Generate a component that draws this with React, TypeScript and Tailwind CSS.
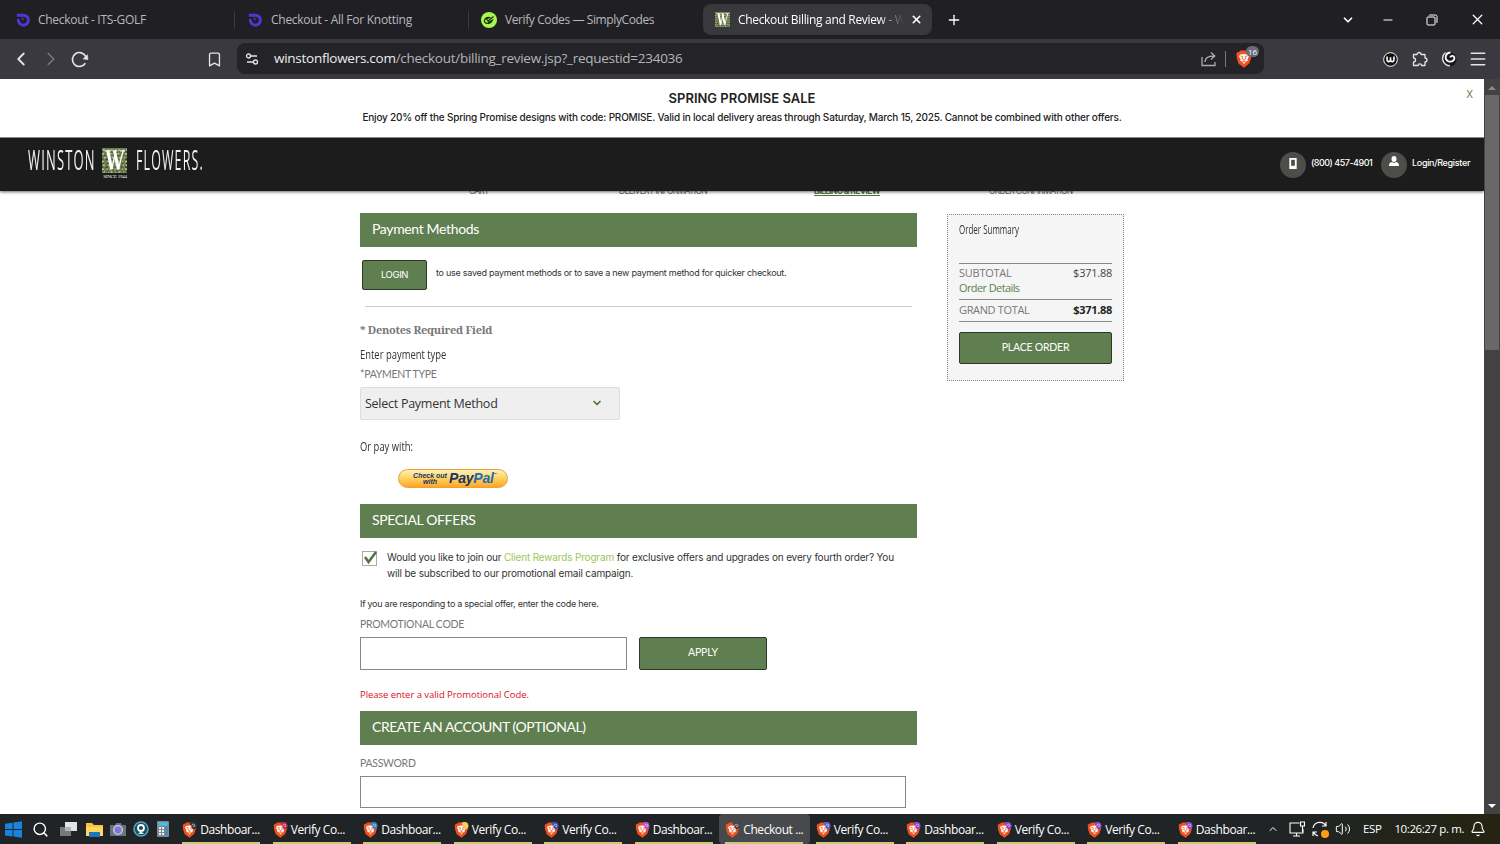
import type { ReactNode } from 'react';
import { Bookmark, ChevronDown, ChevronLeft, ChevronRight, ChevronUp, Menu, Minus, Plus, Search, X, Bell, Volume2 } from 'lucide-react';

const taskItems = [
  { label: 'Dashboar...', badge: '#333333' },
  { label: 'Verify Co...', badge: '#b8284f' },
  { label: 'Dashboar...', badge: '#2c7fc4' },
  { label: 'Verify Co...', badge: '#f2c94c' },
  { label: 'Verify Co...', badge: '#3d4fb8' },
  { label: 'Dashboar...', badge: '#b44fc4' },
  { label: 'Checkout ...', badge: '#444444', active: true },
  { label: 'Verify Co...', badge: '#5a5fd0' },
  { label: 'Dashboar...', badge: '#8a45c8' },
  { label: 'Verify Co...', badge: '#8a45c8' },
  { label: 'Verify Co...', badge: '#8a45c8' },
  { label: 'Dashboar...', badge: '#8a45c8' },
];

function BraveIcon({ badge, className }: { badge?: string; className: string }) {
  return (
    <svg viewBox="0 0 16 18" className={className}>
      <path d="M4.500 .5h7l1.500 1.600 1.500-.2 1.300 2.400-.6 1.500.3 1-2.100 6.500L8 17.800l-5.400-4.100L.5 7.300l.3-1L.2 4.300l1.300-2.400 1.500.2z" fill="#f2501e" />
      <path d="M4 4.500 8 4l4 .5 1 2-1.500 2.500.4 1.500L9.500 12 8 14l-1.500-2-2.400-1.500.4-1.500L3 6.500z" fill="#fff" />
      <path d="m4.500 6 2.300.5L6 8.500l2 1 2-1-.8-2 2.300-.5M8 10v2M6.200 11 8 12l1.800-1" stroke="#f2501e" strokeWidth=".8" fill="none" />
      {badge && <path d="M8 1.500A4.300 4.300 0 0 1 15.800 4a4.300 4.300 0 0 1-4 4.500z" fill={badge} />}
      {badge && <path d="M10.500 4.500c0-3 4-2.500 3.500 0M12 5h2" stroke="#ddd" strokeWidth=".8" fill="none" />}
    </svg>
  );
}

function SwirlIcon() {
  return (
    <svg viewBox="0 0 14 14" className="size-[14px] shrink-0">
      <path d="M.8 2.200H7.400a5 5 0 1 1-4.900 3.900" fill="none" stroke="#5036d8" strokeWidth="2.900" />
      <path d="M5 5.300h2.200v2.200" fill="none" stroke="#5036d8" strokeWidth="1" />
    </svg>
  );
}

function LeafW({ className }: { className: string }) {
  return (
    <svg viewBox="0 0 26 26" className={className}>
      <rect width="26" height="26" fill="#6d7d4e" />
      <path d="M1 2h25M0 6h26M2 10h24M0 14h26M1 18h25M0 22h26M1 25h24" stroke="#b9c68c" strokeWidth="1.600" strokeDasharray="2 3 1 2" />
      <path d="M0 4h26M2 8h24M0 12h26M1 16h25M0 20h26M1 24h25" stroke="#34412a" strokeWidth="1.400" strokeDasharray="1 3 2 4" />
      <path d="M3 3h6M11 3h5M19 3h5" stroke="#fff" strokeWidth="1.500" />
      <path d="m6 3 4 19M13 3l4 19" stroke="#fff" strokeWidth="3.200" />
      <path d="m10 22 4-17M17 22l5-19" stroke="#fff" strokeWidth="1.500" />
    </svg>
  );
}

function SectionBar({ children }: { children: ReactNode }) {
  return (
    <h2 className="flex h-[34px] shrink-0 items-center bg-[#607f50] pb-[3px] pl-3 font-[Lato] text-[14px] text-white">
      {children}
    </h2>
  );
}

function FieldLabel({ children }: { children: ReactNode }) {
  return (
    <label className="h-[16px] font-[Lato] text-[10.5px] leading-[16px] tracking-[-0.3px] text-[#777]">{children}</label>
  );
}

function BrowserChrome() {
  return (
    <>
      <div className="flex h-[39px] items-center bg-[#202024] font-['Open_Sans'] text-[12px] text-[#b8b8bc]">
        <div className="flex w-[235px] items-center gap-[8px] border-r border-[#3a3a3f] pl-[16px]">
          <SwirlIcon />
          <span className="tracking-[-0.3px]">Checkout - ITS-GOLF</span>
        </div>
        <div className="flex w-[234px] items-center gap-[9px] border-r border-[#3a3a3f] pl-[13px]">
          <SwirlIcon />
          <span className="tracking-[-0.27px]">Checkout - All For Knotting</span>
        </div>
        <div className="flex w-[234px] items-center gap-[8px] pl-[12px]">
          <svg viewBox="0 0 16 16" className="size-4">
            <circle cx="8" cy="8" r="8" fill="#a6f750" />
            <path d="M12.500 4.500 7 9l-1.500-2 3-1.500C4 4.500 2.500 9 4 10.500s6 1.500 7.500-2.500L7 10.500" fill="none" stroke="#1d2b12" strokeWidth="1.200" />
          </svg>
          <span className="tracking-[-0.4px]">Verify Codes — SimplyCodes</span>
        </div>
        <div className="flex h-[31px] w-[229px] items-center rounded-lg bg-[#38383d] pl-[12px] text-white">
          <LeafW className="size-[15px]" />
          <span className="ml-2 w-[166px] whitespace-nowrap tracking-[-0.32px] [mask-image:linear-gradient(90deg,#000_140px,transparent)]">
            Checkout Billing and Review - W
          </span>
          <X className="ml-[6px] size-[13px]" strokeWidth={3} />
        </div>
        <Plus className="ml-[14px] size-4 text-white" />
        <div className="ml-auto flex items-center text-white">
          <ChevronDown className="mr-[26px] size-[14px]" strokeWidth={3} />
          <Minus className="mr-[31px] size-[14px]" strokeWidth={1.800} />
          <svg viewBox="0 0 12 12" className="mr-[31px] size-3" fill="none" stroke="currentColor">
            <rect x="1" y="3" width="8" height="8" rx="1" />
            <path d="M3 1.500A1 1 0 0 1 4 1h5.500A1.500 1.500 0 0 1 11 2.500V8a1 1 0 0 1-.5 1" />
          </svg>
          <X className="mr-[14px] size-[17px]" strokeWidth={1.800} />
        </div>
      </div>
      <div className="flex h-[40px] items-center bg-[#3a393f] text-[#e4e4e6]">
        <ChevronLeft className="ml-[10px] size-[22px]" strokeWidth={2} />
        <ChevronRight className="ml-[8px] size-[22px] text-[#77767c]" strokeWidth={1.800} />
        <svg viewBox="0 0 18 18" className="ml-[8px] size-[19px]" fill="none" stroke="currentColor" strokeWidth="1.600">
          <path d="M15 6.500A6.600 6.600 0 1 0 14.500 12.500" />
          <path d="m16.500 4.500.5 4.500-4.500-.5z" fill="currentColor" strokeWidth=".6" />
        </svg>
        <Bookmark className="ml-[117px] size-[17px]" strokeWidth={1.900} />
        <div className="mt-[-1px] ml-[14px] flex h-[31px] w-[1027px] items-center rounded-lg bg-[#242428] pl-[8px]">
          <svg viewBox="0 0 14 14" className="size-[14px]" fill="none" stroke="currentColor" strokeWidth="1.300">
            <circle cx="3.500" cy="4" r="2" />
            <circle cx="10.500" cy="10" r="2" />
            <path d="M6 4h6M2 10h6" />
          </svg>
          <span className="ml-[15px] font-['Open_Sans'] text-[13.5px] tracking-[-0.27px] text-[#b5b5b9]">
            <span className="text-[#ececee]">winstonflowers.com</span>/checkout/billing_review.jsp?_requestid=234036
          </span>
          <svg viewBox="0 0 16 16" className="mr-[8px] ml-auto size-4" fill="none" stroke="#aaaab0" strokeWidth="1.300">
            <path d="M1 6v8.500h13V11M4 11c0-4 3-6 9-6M10 1.500 13.800 5 10 8.500" />
          </svg>
          <div className="h-4 w-px bg-[#77777c]" />
          <div className="relative mr-[5px] ml-[10px] flex w-[23px]">
            <BraveIcon className="h-[18px] w-4" />
            <span className="absolute -top-[4px] left-[10px] rounded-full bg-[#6a6a78] px-[2px] font-['Open_Sans'] text-[8px] leading-[11px] text-white">16</span>
          </div>
        </div>
        <svg viewBox="0 0 14 14" className="ml-[119px] size-[15px]" fill="none" stroke="#fff">
          <circle cx="7" cy="7" r="6.400" fill="#111" strokeWidth=".9" />
          <path d="M3.800 4.300v2.800c0 2.500 3.200 2.500 3.200 0V5v2.100c0 2.500 3.200 2.500 3.200 0V4.300" strokeWidth="1.500" />
        </svg>
        <svg viewBox="0 0 16 16" className="ml-[14px] size-4" fill="none" stroke="currentColor" strokeWidth="1.300">
          <path d="M1.500 3.500H5a2 2 0 1 1 4 0h4V7a2 2 0 1 1 0 4v3.500H9.500a1.700 1.700 0 0 0-3.400 0H1.500V11a2 2 0 0 0 0-4z" strokeLinejoin="round" />
        </svg>
        <svg viewBox="0 0 16 16" className="ml-[13px] size-4">
          <circle cx="8.500" cy="8.500" r="7" fill="#17171a" />
          <path d="M4.500 1.500C-1 6 2 14.500 9 14.800" fill="none" stroke="#ddd" strokeWidth="1.500" />
          <path d="M9.500 1.500C4 2 3 8.500 7.500 10.300c3.500 1.200 6.700-1.300 5.700-4.300-.8-1.800-3.500-1.500-4 .5" fill="none" stroke="#fff" strokeWidth="1.800" />
        </svg>
        <Menu className="ml-[11px] size-5" strokeWidth={1.800} />
      </div>
    </>
  );
}

function SiteHeader() {
  return (
    <header className="relative z-10">
      <div className="relative h-[58px] bg-white pt-[10px] text-center font-[Inter] text-[#222]">
        <p className="text-[13px] leading-[18px] font-semibold">SPRING PROMISE SALE</p>
        <p className="mt-[2px] text-[10px] leading-[16px] font-medium tracking-[-0.19px]">
          Enjoy 20% off the Spring Promise designs with code: PROMISE. Valid in local delivery areas through Saturday, March 15, 2025. Cannot be combined with other offers.
        </p>
        <button className="absolute top-[8px] right-[11px] text-[10px] leading-[14px] text-[#607f50]">X</button>
      </div>
      <div className="flex h-[54px] items-center border-t border-[#888] bg-[#1c1c1c] shadow-[0_1px_3px_rgba(0,0,0,0.6)]">
        <div className="mb-[2px] ml-[28px] flex w-[175px] items-start font-['Open_Sans'] text-[27px] leading-[24px] text-[#f1f1ed]">
          <span className="w-[67px]">
            <span className="inline-block origin-left scale-x-[0.48] tracking-[2.500px]">WINSTON</span>
          </span>
          <div className="mr-[8px] ml-[7px] w-[26px] shrink-0">
            <LeafW className="size-[25px]" />
            <p className="mt-[1px] text-center font-['Liberation_Serif'] text-[5px] leading-[6px] tracking-[-0.2px] whitespace-nowrap">SINCE 1944</p>
          </div>
          <span className="w-[67px]">
            <span className="inline-block origin-left scale-x-[0.46] tracking-[2.500px]">FLOWERS.</span>
          </span>
        </div>
        <div className="ml-auto flex items-center font-[Inter] text-[9px] font-medium text-white">
          <div className="flex size-[26px] items-center justify-center rounded-full bg-[#4d4e4a]">
            <svg viewBox="0 0 8 12" className="mb-[3px] h-[11px] w-2">
              <rect width="8" height="12" fill="#fff" />
              <rect x="2" y="2" width="4" height="6.500" fill="#4d4e4a" />
            </svg>
          </div>
          <span className="mb-[3px] ml-[5px] w-[61px] tracking-[-0.5px] whitespace-nowrap">(800) 457-4901</span>
          <div className="ml-[9px] flex size-[26px] items-center justify-center rounded-full bg-[#4d4e4a]">
            <svg viewBox="0 0 10 10" className="mb-[7px] size-[10px]" fill="#fff">
              <ellipse cx="5" cy="3" rx="2.500" ry="3" />
              <path d="M0 10c0-3 1-3.500 3-4l2 1 2-1c2 .5 3 1 3 4z" />
            </svg>
          </div>
          <span className="mr-[14px] mb-[3px] ml-[5px] w-[58px] tracking-[-0.32px] whitespace-nowrap">Login/Register</span>
        </div>
      </div>
    </header>
  );
}

function PaymentColumn() {
  return (
    <div className="flex w-[557px] flex-col font-[Inter] text-[#333]">
      <SectionBar><span className="tracking-[-0.35px]">Payment Methods</span></SectionBar>
      <div className="mt-[13px] ml-[2px] flex h-[30px] items-center">
        <button className="h-[30px] w-[65px] rounded-[2px] border border-[#2c3926] bg-[#607f50] text-[9.500px] tracking-[-0.4px] text-white">LOGIN</button>
        <span className="mb-[4px] ml-[9px] text-[9px] tracking-[-0.27px]">to use saved payment methods or to save a new payment method for quicker checkout.</span>
      </div>
      <div className="mt-[16px] ml-[5px] h-px w-[547px] bg-[#ccc]" />
      <p className="mt-[14px] h-[18px] font-['Noto_Serif','Liberation_Serif',serif] text-[11px] leading-[17px] font-bold tracking-[-0.27px] text-[#777]">* Denotes Required Field</p>
      <p className="mt-[8px] h-[16px] font-['Open_Sans'] text-[12px] leading-[16px]">
        <span className="inline-block origin-left scale-x-[0.785]">Enter payment type</span>
      </p>
      <div className="mt-[3px] flex"><FieldLabel>*PAYMENT TYPE</FieldLabel></div>
      <div className="mt-[5px] flex h-[33px] w-[260px] items-center justify-between rounded-[2px] border border-[#ddd] bg-[#efefef] pr-[16px] pl-[4px] font-['Open_Sans'] text-[12.5px] tracking-[-0.26px]">
        <span className="pt-[2px]">Select Payment Method</span>
        <ChevronDown className="mb-px size-3 text-[#52733f]" strokeWidth={3.500} />
      </div>
      <p className="mt-[19px] h-[16px] font-['Open_Sans'] text-[12px] leading-[16px]">
        <span className="inline-block origin-left scale-x-[0.785]">Or pay with:</span>
      </p>
      <button className="mt-[14px] ml-[38px] flex h-[19px] w-[110px] items-center rounded-full border border-[#e9a23a] bg-linear-to-b from-[#fff0b8] via-[#ffd15c] to-[#ffa51f] pl-[13px] font-['Liberation_Sans'] font-bold text-[#173468] italic">
        <span className="w-[36px] text-center text-[7px] leading-[6px] whitespace-nowrap">Check out<br />with</span>
        <span className="mb-[2px] ml-px text-[14px] leading-[16px] tracking-[-0.2px]">Pay<span className="text-[#1f6db3]">Pal</span></span>
        <span className="-mt-[8px] text-[3px]">™</span>
      </button>
      <div className="h-[16px]" />
      <SectionBar><span className="tracking-[-0.35px]">SPECIAL OFFERS</span></SectionBar>
      <div className="mt-[11px] flex h-[32px] text-[10px] leading-[16px] tracking-[-0.17px]">
        <svg viewBox="0 0 16 16" className="mt-px ml-[2px] size-4 shrink-0">
          <rect x=".5" y="1.500" width="14" height="14" fill="#fff" stroke="#aaa" />
          <path d="m3 7 3.500 5L14 2" fill="none" stroke="#52733f" strokeWidth="2.500" />
        </svg>
        <p className="ml-[9px] whitespace-nowrap">
          Would you like to join our <span className="text-[#9cc65a]">Client Rewards Program</span> for exclusive offers and upgrades on every fourth order? You<br />
          will be subscribed to our promotional email campaign.
        </p>
      </div>
      <p className="mt-[15px] h-[14px] text-[9px] leading-[15px] tracking-[-0.26px]">If you are responding to a special offer, enter the code here.</p>
      <div className="mt-[6px] flex"><FieldLabel>PROMOTIONAL CODE</FieldLabel></div>
      <div className="mt-[5px] flex h-[33px] gap-3">
        <input className="w-[267px] border border-[#888] bg-white" />
        <button className="w-[128px] rounded-[2px] border border-[#2c3926] bg-[#607f50] pb-px font-[Lato] text-[10.5px] tracking-[-0.1px] text-white">APPLY</button>
      </div>
      <p className="mt-[17px] h-[16px] font-['Open_Sans'] text-[9.500px] leading-[16px] tracking-[-0.05px] text-[#d8101c]">Please enter a valid Promotional Code.</p>
      <div className="h-[8px]" />
      <SectionBar><span className="tracking-[-0.45px]">CREATE AN ACCOUNT (OPTIONAL)</span></SectionBar>
      <div className="mt-[10px] flex"><FieldLabel>PASSWORD</FieldLabel></div>
      <input className="mt-[5px] h-[32px] w-[546px] border border-[#888] bg-white" />
    </div>
  );
}

function OrderSummary() {
  return (
    <aside className="mt-px ml-[30px] flex h-[167px] w-[177px] flex-col self-start border border-dotted border-[#888] bg-[#f5f5f5] px-[11px] font-['Open_Sans'] text-[11px] text-[#777]">
      <h3 className="mt-[7px] h-[16px] text-[12px] leading-[16px] text-[#333]">
        <span className="inline-block origin-left scale-x-[0.665] font-medium">Order Summary</span>
      </h3>
      <div className="mt-[25px] flex h-[18px] items-center justify-between border-t border-[#888] pt-[2px] tracking-[-0.25px]">
        SUBTOTAL <span className="text-[#444]">$371.88</span>
      </div>
      <a className="h-[19px] border-b border-[#888] leading-[13px] tracking-[-0.6px] text-[#607f50]">Order Details</a>
      <div className="flex h-[22px] items-center justify-between border-b border-[#888] tracking-[-0.35px]">
        GRAND TOTAL <b className="tracking-[-0.3px] text-[#222]">$371.88</b>
      </div>
      <button className="mt-[10px] h-[32px] rounded-[2px] border border-[#2c3926] bg-[#607f50] pb-px font-[Lato] text-[10.5px] tracking-[-0.22px] text-white">PLACE ORDER</button>
    </aside>
  );
}

function Taskbar() {
  return (
    <div className="flex h-[30px] shrink-0 items-center bg-[#202426] font-['Open_Sans'] text-[12px] text-white">
      <svg viewBox="0 0 18 18" className="ml-[5px] size-[17px]" fill="#1684e0">
        <path d="m0 3 8-1.200V8.500H0zM9 1.600 18 .3v8.200H9zM0 9.500h8v7L0 15.300zM9 9.500h9v8.300L9 16.500z" />
      </svg>
      <Search className="ml-[10px] size-[17px]" />
      <svg viewBox="0 0 17 14" className="ml-[11px] h-[14px] w-[17px]">
        <path d="M0 5h11v9H0z" fill="#77797b" />
        <path d="M5 0h12v9H5z" fill="#e2e3e4" />
        <path d="M5 5h6v4H5z" fill="#b0b2b4" />
      </svg>
      <svg viewBox="0 0 17 15" className="ml-[9px] h-[15px] w-[17px]">
        <path d="M0 1h6l2 2h9v11H0z" fill="#f3c247" />
        <path d="M0 5h17v9H0z" fill="#ffd75e" />
        <path d="M3 10h11v5H3z" fill="#1c76ba" />
      </svg>
      <svg viewBox="0 0 16 13" className="ml-[7px] h-[13px] w-4">
        <path d="M0 2h5l1-2h5l1 2h4v11H0z" fill="#66727c" />
        <circle cx="8" cy="7" r="5" fill="#cfd5e2" />
        <circle cx="8" cy="7" r="3.700" fill="#8375d5" />
      </svg>
      <svg viewBox="0 0 16 16" className="ml-[7px] size-4">
        <circle cx="8" cy="8" r="7" fill="#194c60" stroke="#55a9c1" strokeWidth="1.500" />
        <circle cx="8" cy="7" r="3" fill="none" stroke="#fff" strokeWidth="1.800" />
        <path d="M5 13h6l-3-3z" fill="#d8e6e9" />
      </svg>
      <svg viewBox="0 0 12 16" className="ml-[8px] h-4 w-3">
        <rect width="12" height="16" rx="1" fill="#7b8b94" />
        <path d="M1.500 1.500h9v3h-9z" fill="#46c3e8" />
        <path d="M2 7h2M5 7h2M2 10h2M5 10h2M2 13h2M5 13h2" stroke="#eee" strokeWidth="2" />
        <path d="M8.500 6h2v8h-2z" fill="#278fc3" />
      </svg>
      <div className="ml-[7px] flex h-full">
        {taskItems.map((item, i) => (
          <div key={i} className={`flex w-[90.5px] flex-col items-center ${item.active ? 'rounded-sm bg-[#47494c]' : ''}`}>
            <div className="flex h-[28px] w-[78px] items-center gap-[3px] pt-[3px]">
              <BraveIcon badge={item.badge} className="h-[16px] w-[15px] shrink-0" />
              <span className="tracking-[-0.42px] whitespace-nowrap">{item.label}</span>
            </div>
            <div className="h-[2px] w-[78px] bg-[#cbc878]" />
          </div>
        ))}
      </div>
      <div className="flex h-full flex-1 items-center bg-linear-to-r from-[#202426] to-[#252412]">
        <ChevronUp className="ml-[5px] size-3" />
        <svg viewBox="0 0 16 16" className="ml-[10px] size-4 shrink-0" fill="none" stroke="#fff" strokeWidth="1.100">
          <path d="M10.500 2H1v10h13V8M4 15h7M7.500 12v3M11.500 1h4v4h-4zM13.500 5v6" />
        </svg>
        <div className="relative ml-[7px] size-[17px] shrink-0">
          <svg viewBox="0 0 16 16" className="size-4" fill="none" stroke="#fff" strokeWidth="1.200">
            <path d="M1 7a7 7 0 0 1 13-2M14 1v4h-4M6 15a7 7 0 0 1-4.500-4M1 15v-4h4" />
          </svg>
          <span className="absolute right-0 bottom-0 size-2 rounded-full bg-[#ff9d13]" />
        </div>
        <Volume2 className="ml-[6px] size-4 shrink-0" strokeWidth={1.500} />
        <span className="ml-[12px] text-[11.500px] tracking-[-0.4px]">ESP</span>
        <span className="ml-[13px] text-[11.500px] tracking-[-0.4px] whitespace-nowrap">10:26:27 p. m.</span>
        <Bell className="ml-[6px] size-[16px] shrink-0" strokeWidth={1.700} />
      </div>
    </div>
  );
}

export default function App() {
  return (
    <div className="flex h-[844px] w-[1500px] flex-col overflow-hidden bg-white">
      <BrowserChrome />
      <div className="flex h-[735px]">
        <main className="w-[1484px] overflow-hidden bg-white">
          <SiteHeader />
          {/* checkout steps scrolled under the sticky header */}
          <nav className="-mt-[6px] flex h-[12px] pl-[469px] font-[Inter] text-[8.5px] leading-[12px] whitespace-nowrap text-[#666]">
            <span className="w-[150px] tracking-[-0.8px]">CART</span>
            <span className="w-[195px] tracking-[-0.7px]">DELIVERY INFORMATION</span>
            <span className="w-[175px] font-bold tracking-[-0.63px] text-[#52733f] underline">BILLING &amp; REVIEW</span>
            <span className="tracking-[-0.72px]">ORDER CONFIRMATION</span>
          </nav>
          <div className="mt-[16px] flex pl-[360px]">
            <PaymentColumn />
            <OrderSummary />
          </div>
        </main>
        <div className="flex w-4 flex-col items-center bg-[#424242]">
          <div className="mt-[7px] size-0 border-x-[4px] border-b-[4px] border-x-transparent border-b-[#888]" />
          <div className="mt-[5px] h-[255px] w-[14px] bg-[#686868]" />
          <div className="mt-auto mb-[6px] size-0 border-x-[4px] border-t-[4px] border-x-transparent border-t-white" />
        </div>
      </div>
      <Taskbar />
    </div>
  );
}
